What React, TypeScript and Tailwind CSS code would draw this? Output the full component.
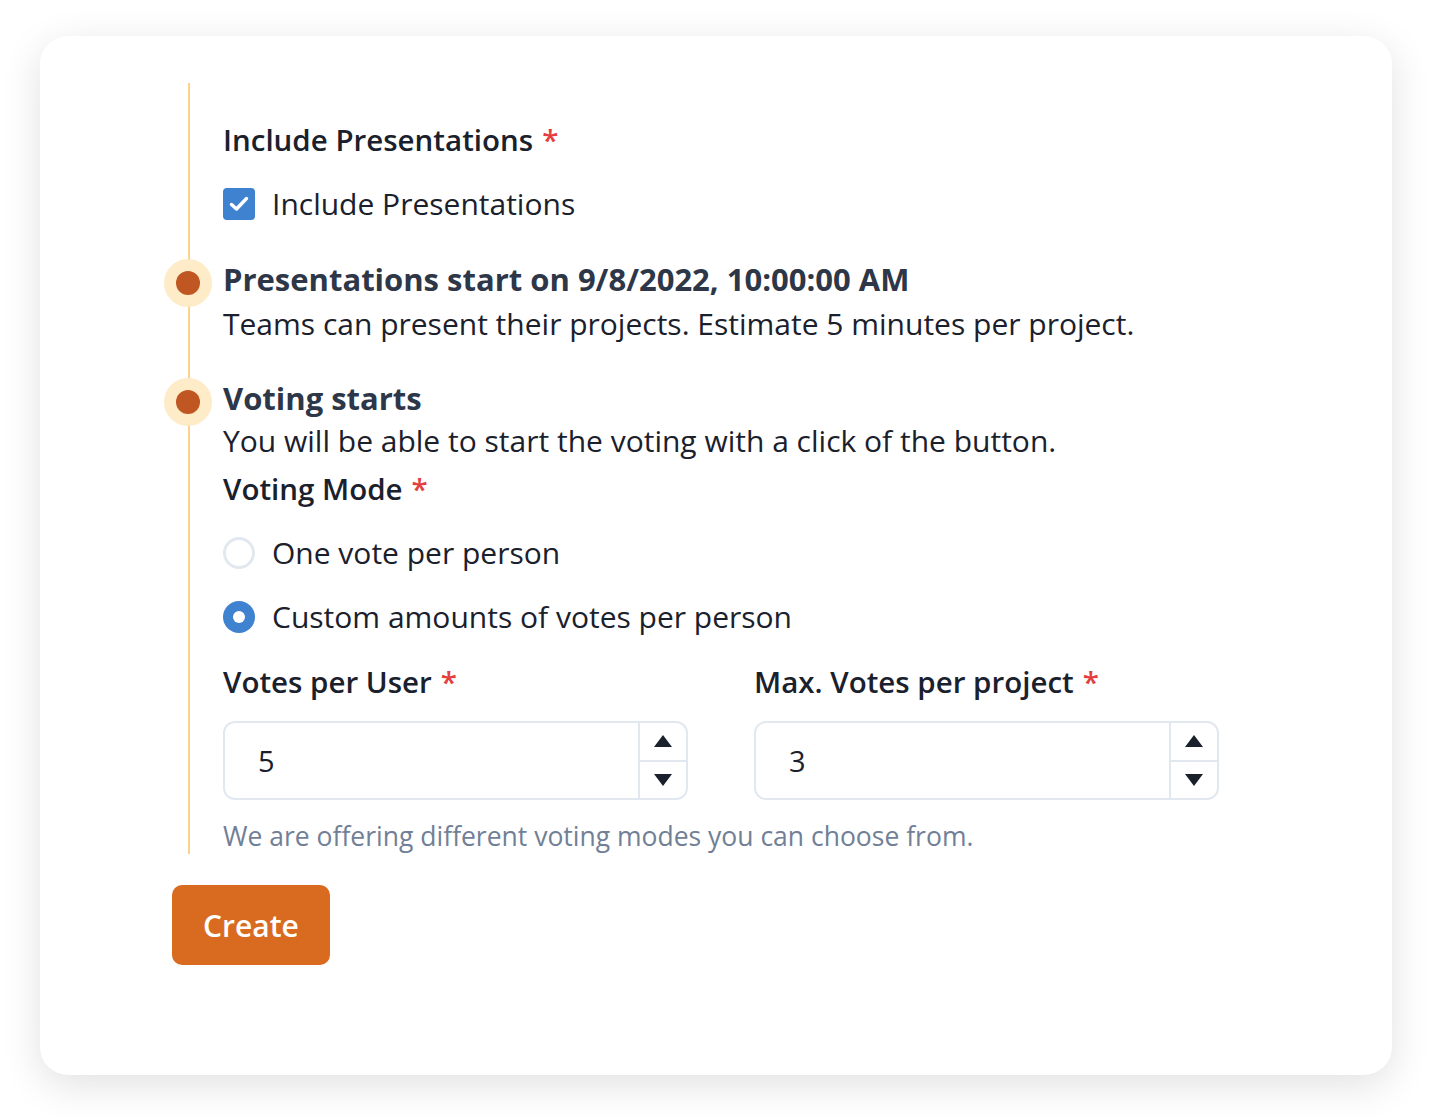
import React from "react";

const font = { fontFamily: '"Open Sans", "Noto Sans", sans-serif' };

function Dot() {
  return (
    <div className="absolute left-[-59px] top-[0px] w-[48px] h-[48px] rounded-full bg-[#FEEBC8] flex items-center justify-center">
      <div className="w-[24px] h-[24px] rounded-full bg-[#C05621]" />
    </div>
  );
}

function Stepper() {
  return (
    <div className="w-[48px] border-l-2 border-[#E2E8F0] flex flex-col">
      <div className="flex-1 flex items-center justify-center border-b-2 border-[#E2E8F0]">
        <svg width="20" height="14" viewBox="0 0 20 14"><path d="M10 1 L19 13 L1 13 Z" fill="#1A202C" /></svg>
      </div>
      <div className="flex-1 flex items-center justify-center">
        <svg width="20" height="14" viewBox="0 0 20 14"><path d="M1 1 L19 1 L10 13 Z" fill="#1A202C" /></svg>
      </div>
    </div>
  );
}

function NumberInput({ value }: { value: string }) {
  return (
    <div className="h-[79px] border-2 border-[#E2E8F0] rounded-[12px] flex overflow-hidden">
      <div className="flex-1 flex items-center pl-[33px] text-[29px] text-[#1A202C]">{value}</div>
      <Stepper />
    </div>
  );
}

function Req() {
  return <span className="text-[#E53E3E] ml-[9px]">*</span>;
}

export default function App() {
  return (
    <div className="min-h-screen bg-white pt-[36px] px-[40px]" style={font}>
      <div className="bg-white rounded-[28px] shadow-[0_10px_40px_rgba(0,0,0,0.12)] h-[1039px] pl-[132px] pt-[47px]">
        <div className="ml-[16px] border-l-2 border-[#FBD38D] pl-[33px] pt-[37px] w-[1080px]">
          <div className="text-[29.5px] font-semibold text-[#1A202C] leading-[40px]">
            Include Presentations<Req />
          </div>
          <label className="mt-[24px] flex items-center gap-[17px]">
            <span className="w-[32px] h-[32px] rounded-[4px] bg-[#3F82D0] flex items-center justify-center">
              <svg width="20" height="16" viewBox="0 0 20 16"><path d="M2.5 8.5 L7.5 13 L17.5 2.5" stroke="white" strokeWidth="3.4" fill="none" strokeLinecap="round" strokeLinejoin="round" /></svg>
            </span>
            <span className="text-[30px] text-[#1A202C] leading-[40px]">Include Presentations</span>
          </label>

          <div className="relative mt-[35px]">
            <Dot />
            <div className="text-[31px] font-bold text-[#2D3748] leading-[40px]">Presentations start on 9/8/2022, 10:00:00 AM</div>
          </div>
          <div className="text-[30px] text-[#1A202C] leading-[40px] mt-[5px]">Teams can present their projects. Estimate 5 minutes per project.</div>

          <div className="relative mt-[34px]">
            <Dot />
            <div className="text-[31px] font-bold text-[#2D3748] leading-[40px]">Voting starts</div>
          </div>
          <div className="text-[30px] text-[#1A202C] leading-[40px] mt-[3px]">You will be able to start the voting with a click of the button.</div>

          <div className="text-[29.5px] font-semibold text-[#1A202C] leading-[40px] mt-[8px]">
            Voting Mode<Req />
          </div>
          <div className="mt-[24px] flex flex-col gap-[24px]">
            <label className="flex items-center gap-[17px]">
              <span className="w-[32px] h-[32px] rounded-full border-[3px] border-[#E2E8F0]" />
              <span className="text-[30px] text-[#1A202C] leading-[40px]">One vote per person</span>
            </label>
            <label className="flex items-center gap-[17px]">
              <span className="w-[32px] h-[32px] rounded-full bg-[#3F82D0] flex items-center justify-center">
                <span className="w-[12px] h-[12px] rounded-full bg-white" />
              </span>
              <span className="text-[30px] text-[#1A202C] leading-[40px]">Custom amounts of votes per person</span>
            </label>
          </div>

          <div className="mt-[25px] grid grid-cols-2 gap-x-[66px] w-[996px]">
            <div>
              <div className="text-[29.5px] font-semibold text-[#1A202C] leading-[40px]">Votes per User<Req /></div>
              <div className="mt-[19px]"><NumberInput value="5" /></div>
            </div>
            <div>
              <div className="text-[29.5px] font-semibold text-[#1A202C] leading-[40px]">Max. Votes per project<Req /></div>
              <div className="mt-[19px]"><NumberInput value="3" /></div>
            </div>
          </div>
          <div className="text-[26.5px] text-[#718096] leading-[36px] mt-[18px]">We are offering different voting modes you can choose from.</div>
        </div>

        <button className="mt-[31px] h-[80px] w-[158px] rounded-[10px] bg-[#D96B20] text-white text-[30px] font-semibold">Create</button>
      </div>
    </div>
  );
}
